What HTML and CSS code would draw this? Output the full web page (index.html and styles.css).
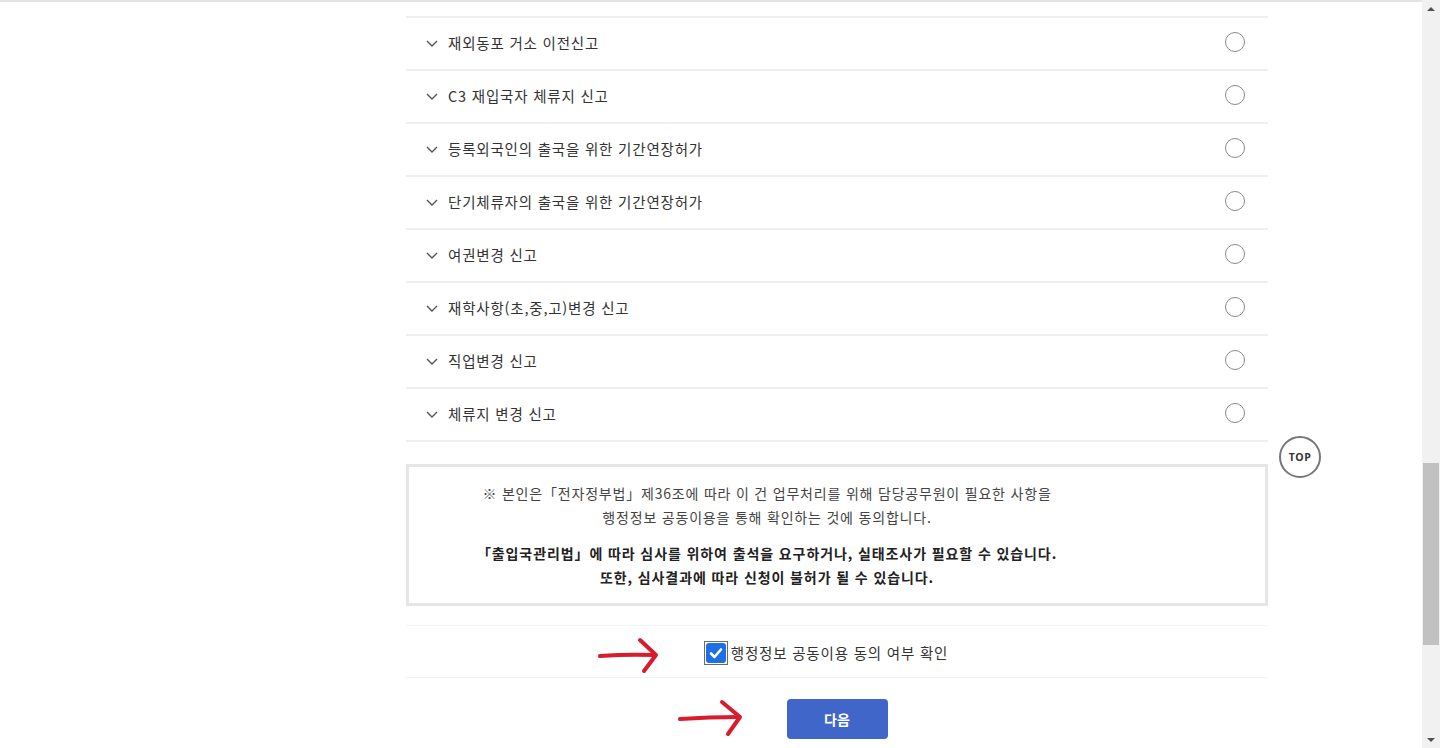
FILE: index.html
```html
<!DOCTYPE html>
<html lang="ko">

<head>
  <meta charset="UTF-8">
  <meta name="viewport" content="width=device-width, initial-scale=1.0">
  <title>민원신청 - 신청서 선택</title>
  <link rel="stylesheet" href="styles.css">
</head>

<body>
  <div class="screen">
    <div class="page">
      <div class="content">
        <ul class="apply-list">
          <li class="apply-item">
            <svg class="chevron" viewBox="0 0 12 7"><polyline points="1,1 6,6 11,1"/></svg>
            <span class="apply-name">재외동포 거소 이전신고</span>
            <span class="radio"></span>
          </li>
          <li class="apply-item">
            <svg class="chevron" viewBox="0 0 12 7"><polyline points="1,1 6,6 11,1"/></svg>
            <span class="apply-name">C3 재입국자 체류지 신고</span>
            <span class="radio"></span>
          </li>
          <li class="apply-item">
            <svg class="chevron" viewBox="0 0 12 7"><polyline points="1,1 6,6 11,1"/></svg>
            <span class="apply-name">등록외국인의 출국을 위한 기간연장허가</span>
            <span class="radio"></span>
          </li>
          <li class="apply-item">
            <svg class="chevron" viewBox="0 0 12 7"><polyline points="1,1 6,6 11,1"/></svg>
            <span class="apply-name">단기체류자의 출국을 위한 기간연장허가</span>
            <span class="radio"></span>
          </li>
          <li class="apply-item">
            <svg class="chevron" viewBox="0 0 12 7"><polyline points="1,1 6,6 11,1"/></svg>
            <span class="apply-name">여권변경 신고</span>
            <span class="radio"></span>
          </li>
          <li class="apply-item">
            <svg class="chevron" viewBox="0 0 12 7"><polyline points="1,1 6,6 11,1"/></svg>
            <span class="apply-name">재학사항(초,중,고)변경 신고</span>
            <span class="radio"></span>
          </li>
          <li class="apply-item">
            <svg class="chevron" viewBox="0 0 12 7"><polyline points="1,1 6,6 11,1"/></svg>
            <span class="apply-name">직업변경 신고</span>
            <span class="radio"></span>
          </li>
          <li class="apply-item">
            <svg class="chevron" viewBox="0 0 12 7"><polyline points="1,1 6,6 11,1"/></svg>
            <span class="apply-name">체류지 변경 신고</span>
            <span class="radio"></span>
          </li>
        </ul>

        <div class="notice">
          <p>※ 본인은「전자정부법」제36조에 따라 이 건 업무처리를 위해 담당공무원이 필요한 사항을<br>
            행정정보 공동이용을 통해 확인하는 것에 동의합니다.</p>
          <p class="notice-strong">「출입국관리법」에 따라 심사를 위하여 출석을 요구하거나, 실태조사가 필요할 수 있습니다.<br>
            또한, 심사결과에 따라 신청이 불허가 될 수 있습니다.</p>
        </div>

        <div class="agree-row">
          <span class="check-box">
            <svg viewBox="0 0 20 20"><polyline points="5,10.5 8.5,14 15,6.5"/></svg>
          </span>
          <span class="agree-label">행정정보 공동이용 동의 여부 확인</span>
        </div>

        <div class="btn-row">
          <button class="btn-next">다음</button>
        </div>
      </div>

      <!-- floating things over the page -->
      <a class="top-btn">TOP</a>

      <svg class="mark mark-check" viewBox="0 0 70 40">
        <path d="M3 19 Q30 17 58 18"/>
        <path d="M43 3 L59 18 L47 34"/>
      </svg>
      <svg class="mark mark-next" viewBox="0 0 70 40">
        <path d="M3 20 Q32 18 62 18"/>
        <path d="M45 3 L63 18 L51 35"/>
      </svg>
    </div>

    <div class="scrollbar">
      <div class="scroll-arrow">
        <svg viewBox="0 0 8 4"><polygon points="0,4 4,0 8,4"/></svg>
      </div>
      <div class="scroll-track">
        <div class="scroll-thumb"></div>
      </div>
      <div class="scroll-arrow">
        <svg viewBox="0 0 8 4"><polygon points="0,0 8,0 4,4"/></svg>
      </div>
    </div>
  </div>
</body>

</html>
```

FILE: styles.css
```css
body {
  margin: 0;
  font-family: "Noto Sans CJK KR", "Noto Sans", sans-serif;
  color: #333;
  background-color: #fff;
  overflow: hidden;
}

.screen {
  display: flex;
  height: 748px;
}

.page {
  flex: 1;
  position: relative;
  border-top: 2px solid #e3e3e3;
  overflow: hidden;
}

.content {
  width: 862px;
  margin-left: 406px;
  padding-top: 14px;
}

/* list of applications */

.apply-list {
  list-style: none;
  margin: 0;
  padding: 0;
  border-bottom: 2px solid #efefef;
}

.apply-item {
  display: flex;
  align-items: center;
  height: 51px;
  padding: 0 23px 0 20px;
  border-top: 2px solid #efefef;
}

.chevron {
  width: 12px;
  height: 7px;
  margin-right: 10px;
  fill: none;
  stroke: #555;
  stroke-width: 1.4;
}

.apply-name {
  flex: 1;
  font-size: 14.5px;
  letter-spacing: 0.8px;
  color: #333;
  margin-top: -2px;
}

.radio {
  width: 18px;
  height: 18px;
  border: 1.5px solid #8a8a8a;
  border-radius: 50%;
  margin-top: -4px;
}

/* agreement notice */

.notice {
  margin-top: 22px;
  border: 3px solid #e6e6e6;
  padding: 14px 150px 14px 10px;
  text-align: center;
  font-size: 14px;
  line-height: 24px;
  letter-spacing: 0.8px;
  color: #444;
}

.notice p {
  margin: 0;
}

.notice .notice-strong {
  margin-top: 12px;
  font-weight: bold;
  letter-spacing: 0.9px;
  color: #222;
}

.agree-row {
  display: flex;
  justify-content: center;
  align-items: center;
  box-sizing: border-box;
  height: 53px;
  margin-top: 19px;
  padding-top: 3px;
  padding-right: 22px;
  border-top: 1px solid #f4f4f4;
  border-bottom: 1px solid #f4f4f4;
}

.check-box {
  width: 20px;
  height: 20px;
  border: 1px solid #6a6a6a;
  padding: 1px;
  margin-right: 3px;
}

.check-box svg {
  display: block;
  width: 20px;
  height: 20px;
  background-color: #1e6fe6;
  border-radius: 3px;
  fill: none;
  stroke: #fff;
  stroke-width: 2.6;
  stroke-linecap: round;
  stroke-linejoin: round;
}

.agree-label {
  font-size: 14.5px;
  letter-spacing: 0.8px;
  color: #333;
  margin-top: -2px;
}

.btn-row {
  display: flex;
  justify-content: center;
  margin-top: 21px;
}

.btn-next {
  width: 101px;
  height: 40px;
  border: none;
  border-radius: 4px;
  background-color: #3f66c8;
  color: white;
  font-family: inherit;
  font-size: 14px;
  font-weight: bold;
}

/* floating */

.top-btn {
  position: absolute;
  left: 1279px;
  top: 434px;
  width: 38px;
  height: 38px;
  border: 2px solid #777;
  border-radius: 50%;
  background-color: white;
  display: flex;
  align-items: center;
  justify-content: center;
  font-family: "Open Sans", sans-serif;
  font-size: 10.5px;
  font-weight: bold;
  color: #333;
  letter-spacing: 0.5px;
}

.mark {
  position: absolute;
  width: 70px;
  height: 40px;
  fill: none;
  stroke: #d81c2b;
  stroke-width: 4;
  stroke-linecap: round;
  stroke-linejoin: round;
}

.mark-check {
  left: 597px;
  top: 635px;
}

.mark-next {
  left: 677px;
  top: 697px;
}

/* window scrollbar */

.scrollbar {
  width: 18px;
  background-color: #f1f1f1;
  display: flex;
  flex-direction: column;
}

.scroll-arrow {
  height: 17px;
  display: flex;
  align-items: center;
  justify-content: center;
}

.scroll-arrow svg {
  width: 8px;
  height: 4px;
  fill: #505050;
}

.scroll-track {
  flex: 1;
  padding: 0 1px;
}

.scroll-thumb {
  margin-top: 446px;
  height: 182px;
  background-color: #c1c1c1;
}
```
